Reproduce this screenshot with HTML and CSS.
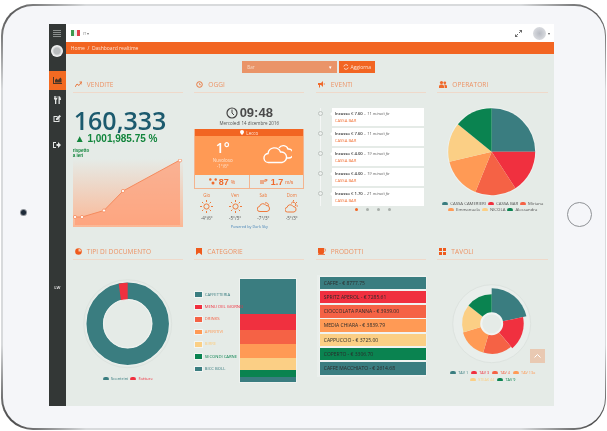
FILE: index.html
```html
<!DOCTYPE html>
<html lang="it">
<head>
  <meta charset="UTF-8" />
  <title>Dashboard realtime</title>
  <link rel="stylesheet" href="styles.css">
</head>
<body>
  <div class="tablet-edge">
    <div class="tablet">
      <div class="bezel bezel-left"><span class="camera"></span></div>

      <div class="screen">
        <nav class="sidebar">
          <div class="side-item side-menu">
            <svg width="8" height="7" viewBox="0 0 8 7"><path d="M0 .5h8M0 2.5h8M0 4.5h8M0 6.5h8" stroke="#8b8f8e" fill="none"/></svg>
          </div>
          <div class="side-avatar"></div>
          <div class="side-item side-active">
            <svg width="9" height="7" viewBox="0 0 9 7"><path d="M0 0v7h9V6H1V0zM2 5.500V3l1.500-1.500L5 3l2.500-2.500L8.500 2v3.500z" fill="#4a3526"/></svg>
          </div>
          <div class="side-item">
            <svg width="7" height="8" viewBox="0 0 7 8"><path d="M0 0h.7v2h.6V0H2v2h.7V0h.6v3L2.300 4v4H1V4L0 3zM4.500 8V0C6 0 7 1.500 7 4H5.800v4z" fill="#e4e6e5"/></svg>
          </div>
          <div class="side-item">
            <svg width="8" height="7" viewBox="0 0 8 7"><path d="M.5 1h4.500L4 2H1.500v4h4V4l1-1v4H.5zM3 3.500 6.500 0 8 1.300 4.500 5H3z" fill="#e4e6e5"/></svg>
          </div>
          <div class="side-item side-exit">
            <svg width="8" height="6" viewBox="0 0 8 6"><path d="M0 0h3v1H1v4h2v1H0zM3.500 2H5V0l3 3-3 3V4H3.500z" fill="#e4e6e5"/></svg>
          </div>
          <div class="side-foot">LW</div>
        </nav>

        <div class="main">
          <header class="topbar">
            <span class="flag"><i class="flag-g"></i><i class="flag-w"></i><i class="flag-r"></i></span>
            <span class="lang">IT ▾</span>
            <span class="topbar-space"></span>
            <svg class="expand" width="7" height="7" viewBox="0 0 7 7"><path d="M4 0h3v3zM0 7V4l3 3z" fill="#666"/><path d="M1.500 5.500l1.500-1.500M4 3l1.500-1.500" stroke="#666" fill="none"/></svg>
            <span class="user-avatar"></span>
            <span class="caret">▾</span>
          </header>

          <div class="crumbs">Home &nbsp;/&nbsp; Dashboard realtime</div>

          <div class="content">
            <div class="filter-row">
              <div class="filter-select"><span>Bar</span><span class="filter-caret">▾</span></div>
              <div class="filter-button">
                <svg width="6" height="6" viewBox="0 0 6 6"><path d="M5 1.800A2.300 2.300 0 0 0 .8 2.500M1 4.200A2.300 2.300 0 0 0 5.200 3.500" stroke="#fff" stroke-width=".7" fill="none"/></svg>
                Aggiorna
              </div>
            </div>

            <div class="dash-grid">
              <section class="panel">
                <h2 class="panel-title">
                  <svg width="7" height="7" viewBox="0 0 7 7"><path d="M0 6l2-3 2 1.500L6.500 1M4.500 1H7v2.500" stroke="#e8773f" fill="none"/></svg>
                  VENDITE
                </h2>
                <div class="sales-total">160,333</div>
                <div class="sales-change">▲ 1,001,985.75 %</div>
                <div class="sales-note">rispetto<br>a ieri</div>
                <svg class="sales-chart" width="110" height="68" viewBox="0 0 110 68">
                  <defs>
                    <linearGradient id="plotBg" x1="0" y1="0" x2="0" y2="1">
                      <stop offset="0" stop-color="#e5ebe7"/>
                      <stop offset="1" stop-color="#fbb795"/>
                    </linearGradient>
                  </defs>
                  <rect width="110" height="68" fill="url(#plotBg)"/>
                  <path d="M2 58H9L31 51.500 50 32 107 1V66H2z" fill="#ff9f78" fill-opacity=".75"/>
                  <path d="M2 58H9L31 51.500 50 32 107 1" fill="none" stroke="#f58b5e"/>
                  <g fill="#fff" stroke="#f58b5e" stroke-width=".8">
                    <circle cx="2" cy="58" r="1.600"/>
                    <circle cx="9" cy="58" r="1.600"/>
                    <circle cx="31" cy="51.500" r="1.600"/>
                    <circle cx="50" cy="32" r="1.600"/>
                    <circle cx="107" cy="1.500" r="1.600"/>
                  </g>
                </svg>
              </section>

              <section class="panel">
                <h2 class="panel-title">
                  <svg width="7" height="7" viewBox="0 0 7 7"><circle cx="3.500" cy="3.500" r="2.800" stroke="#e8773f" fill="none"/><path d="M3.500 2v1.700H5" stroke="#e8773f" stroke-width=".7" fill="none"/></svg>
                  OGGI
                </h2>
                <div class="clock">
                  <svg width="12" height="12" viewBox="0 0 12 12"><circle cx="6" cy="6" r="5" stroke="#444" stroke-width="1.200" fill="none"/><path d="M6 2.500V6l2 2" stroke="#444" fill="none"/></svg>
                  09:48
                </div>
                <div class="clock-date">Mercoledì 14 dicembre 2016</div>
                <div class="weather">
                  <div class="weather-place">
                    <svg width="4" height="5" viewBox="0 0 4 5"><path d="M2 0a2 2 0 0 1 2 2C4 3 2 5 2 5S0 3 0 2a2 2 0 0 1 2-2z" fill="#fff"/></svg>
                    Lecco
                  </div>
                  <div class="weather-now">
                    <div class="weather-temp">
                      <div class="temp-big">1°</div>
                      <div class="temp-label">Nuvoloso</div>
                      <div class="temp-label">-1°/6°</div>
                    </div>
                    <svg class="weather-icon" width="29" height="20" viewBox="0 0 29 20" fill="none" stroke="#fff" stroke-width="1.400">
                      <path d="M16 4a5 5 0 0 1 9 1 4.500 4.500 0 0 1 1 9h-2"/>
                      <path d="M6 18.500a4.500 4.500 0 0 1-1-9 6.500 6.500 0 0 1 12.500-1.500A5.300 5.300 0 0 1 19 18.500z"/>
                    </svg>
                  </div>
                  <div class="weather-stats">
                    <div class="stat">
                      <svg width="8" height="7" viewBox="0 0 8 7"><g fill="#ef6a2c"><circle cx="1.300" cy="1.500" r="1.200"/><circle cx="6.700" cy="1.500" r="1.200"/><circle cx="4" cy="5" r="1.500"/></g></svg>
                      <b>87</b> <small>%</small>
                    </div>
                    <div class="stat">
                      <svg width="9" height="5" viewBox="0 0 9 5"><path d="M0 2h6a1 1 0 1 0-1-1M0 4h4" stroke="#ef6a2c" fill="none"/></svg>
                      <b>1.7</b> <small>m/s</small>
                    </div>
                  </div>
                </div>
                <div class="forecast">
                  <div class="day">
                    <span class="day-name">Gio</span>
                    <svg class="sun" width="13" height="13" viewBox="0 0 13 13"><circle cx="6.500" cy="6.500" r="2.600"/><path d="M6.500 0v2M6.500 11v2M0 6.500h2M11 6.500h2M2 2l1.300 1.300M9.700 9.700 11 11M2 11l1.300-1.300M9.700 3.300 11 2"/></svg>
                    <span class="day-temp">-4°/6°</span>
                  </div>
                  <div class="day">
                    <span class="day-name">Ven</span>
                    <svg class="sun" width="13" height="13" viewBox="0 0 13 13"><circle cx="6.500" cy="6.500" r="2.600"/><path d="M6.500 0v2M6.500 11v2M0 6.500h2M11 6.500h2M2 2l1.300 1.300M9.700 9.700 11 11M2 11l1.300-1.300M9.700 3.300 11 2"/></svg>
                    <span class="day-temp">-5°/5°</span>
                  </div>
                  <div class="day">
                    <span class="day-name">Sab</span>
                    <svg class="sun" width="13" height="13" viewBox="0 0 13 13"><path d="M3 11.500a2.500 2.500 0 0 1-.5-5 3.500 3.500 0 0 1 6.500-1 3 3 0 0 1 1 6z"/><path d="M8 3a2.500 2.500 0 0 1 3.500 2.500"/></svg>
                    <span class="day-temp">-7°/3°</span>
                  </div>
                  <div class="day">
                    <span class="day-name">Dom</span>
                    <svg class="sun" width="13" height="13" viewBox="0 0 13 13"><path d="M2.500 12a2.300 2.300 0 0 1-.4-4.600 3.200 3.200 0 0 1 6-.9 2.800 2.800 0 0 1 .9 5.500z"/><path d="M6 3.500a2.500 2.500 0 0 1 4.500 2.500M8.500 0v1.500M12 2l-1 1M13 6h-1.500"/></svg>
                    <span class="day-temp">-5°/3°</span>
                  </div>
                </div>
                <div class="powered">Powered by Dark Sky</div>
              </section>

              <section class="panel">
                <h2 class="panel-title">
                  <svg width="8" height="7" viewBox="0 0 8 7"><path d="M0 2h3l2-2v6L3 4H2v2.500H1V4H0z" fill="#ef6a2c"/><path d="M6 2a1.500 1.500 0 0 1 0 2" stroke="#ef6a2c" fill="none" stroke-width=".6"/></svg>
                  EVENTI
                </h2>
                <div class="timeline">
                  <div class="event"><span class="event-dot"></span><div class="event-card"><div><b>Incasso € 7.60</b> – <i>11 minuti fa</i></div><div class="event-place">CASSA BAR</div></div></div>
                  <div class="event"><span class="event-dot"></span><div class="event-card"><div><b>Incasso € 7.60</b> – <i>11 minuti fa</i></div><div class="event-place">CASSA BAR</div></div></div>
                  <div class="event"><span class="event-dot"></span><div class="event-card"><div><b>Incasso € 4.00</b> – <i>19 minuti fa</i></div><div class="event-place">CASSA BAR</div></div></div>
                  <div class="event"><span class="event-dot"></span><div class="event-card"><div><b>Incasso € 4.00</b> – <i>19 minuti fa</i></div><div class="event-place">CASSA BAR</div></div></div>
                  <div class="event"><span class="event-dot"></span><div class="event-card"><div><b>Incasso € 1.70</b> – <i>21 minuti fa</i></div><div class="event-place">CASSA BAR</div></div></div>
                </div>
                <div class="pager"><i class="pager-on"></i><i></i><i></i><i></i></div>
              </section>

              <section class="panel">
                <h2 class="panel-title">
                  <svg width="8" height="7" viewBox="0 0 8 7"><g fill="#ef6a2c"><circle cx="2.500" cy="1.600" r="1.600"/><circle cx="5.800" cy="1.800" r="1.400"/><path d="M0 7V5a2 2 0 0 1 2-1.500h1A2 2 0 0 1 5 5v2zM5.600 7V4.800L5 3.500h1.200A1.800 1.800 0 0 1 8 5v2z"/></g></svg>
                  OPERATORI
                </h2>
                <svg class="pie-operators" width="111" height="98" viewBox="437 103 111 98">
                  <circle cx="491.700" cy="151.700" r="44.500" fill="#eef2ef"/>
                  <path d="M491.700 151.700V108.200A43.500 43.500 0 0 1 535.200 151.700z" fill="#3a7d80"/>
                  <path d="M491.700 151.700H535.200A43.500 43.500 0 0 1 515.400 188.200z" fill="#f0303f"/>
                  <path d="M491.700 151.700 515.400 188.200A43.500 43.500 0 0 1 475.400 192z" fill="#f56245"/>
                  <path d="M491.700 151.700 475.400 192A43.500 43.500 0 0 1 449.400 161.800z" fill="#ff9a55"/>
                  <path d="M491.700 151.700 449.400 161.800A43.500 43.500 0 0 1 457.900 124.300z" fill="#fbcf85"/>
                  <path d="M491.700 151.700 457.900 124.300A43.500 43.500 0 0 1 491.700 108.200z" fill="#0a8350"/>
                </svg>
                <div class="legend legend-dark">
                  <span><i class="sw-teal"></i>CASSA CAMERIERI</span>
                  <span><i class="sw-red"></i>CASSA BAR</span>
                  <span><i class="sw-coral"></i>Miriana</span>
                  <span><i class="sw-orange"></i>Emmanuela</span>
                  <span><i class="sw-yellow"></i>NICOLA</span>
                  <span><i class="sw-green"></i>Alessandra</span>
                </div>
              </section>

              <section class="panel">
                <h2 class="panel-title">
                  <svg width="7" height="7" viewBox="0 0 7 7"><circle cx="3.500" cy="3.500" r="3.300" fill="#ef5a1c"/><path d="M3.500 3.500V.8A2.700 2.700 0 0 1 6.200 3.500z" fill="#f9c8a8"/></svg>
                  TIPI DI DOCUMENTO
                </h2>
                <svg class="donut" width="110" height="94" viewBox="73 279 110 94">
                  <circle cx="127.700" cy="323.700" r="44" fill="none" stroke="#dde3df"/>
                  <circle cx="127.700" cy="323.700" r="42" fill="#eef2ef"/>
                  <circle cx="127.700" cy="323.700" r="33" fill="none" stroke="#3a7d80" stroke-width="16.500"/>
                  <path d="M127.700 282.700V307.200L122 307.900 118.700 283.700A41 41 0 0 1 127.700 282.700z" fill="#f0303f"/>
                  <circle cx="127.700" cy="323.700" r="24" fill="#e5ebe7" stroke="#eef2ef"/>
                </svg>
                <div class="legend">
                  <span class="c-teal"><i class="sw-teal"></i>Scontrini</span>
                  <span class="c-red"><i class="sw-red"></i>Fatture</span>
                </div>
              </section>

              <section class="panel">
                <h2 class="panel-title">
                  <svg width="6" height="7" viewBox="0 0 6 7"><path d="M0 0h6v7L3 4.800 0 7z" fill="#ef5a1c"/></svg>
                  CATEGORIE
                </h2>
                <div class="cat-body">
                  <ul class="cat-legend">
                    <li class="c-teal"><i class="box sw-teal"></i>CAFFETTERIA</li>
                    <li class="c-red"><i class="box sw-red"></i>MENU DEL GIORNO</li>
                    <li class="c-coral"><i class="box sw-coral"></i>DRINKS</li>
                    <li class="c-orange"><i class="box sw-orange"></i>APERITIVI</li>
                    <li class="c-yellow"><i class="box sw-yellow"></i>BIRRE</li>
                    <li class="c-green"><i class="box sw-green"></i>SECONDI CARNE</li>
                    <li class="c-teal"><i class="box sw-teal"></i>BICC BOLL</li>
                  </ul>
                  <div class="cat-stack">
                    <i class="sw-teal seg-1"></i>
                    <i class="sw-red seg-2"></i>
                    <i class="sw-coral seg-3"></i>
                    <i class="sw-orange seg-4"></i>
                    <i class="sw-yellow seg-5"></i>
                    <i class="sw-green seg-6"></i>
                    <i class="sw-teal seg-7"></i>
                  </div>
                </div>
              </section>

              <section class="panel">
                <h2 class="panel-title">
                  <svg width="8" height="7" viewBox="0 0 8 7"><path d="M0 0h6v4.500a1.500 1.500 0 0 1-1.500 1.500h-3A1.500 1.500 0 0 1 0 4.500zM0 6.300h7V7H0z" fill="#ef5a1c"/><path d="M6 1h.8a.9.9 0 0 1 0 2.200H6" stroke="#ef5a1c" stroke-width=".6" fill="none"/></svg>
                  PRODOTTI
                </h2>
                <div class="products">
                  <div class="product sw-teal">CAFFE - € 8777.75</div>
                  <div class="product sw-red">SPRITZ APEROL - € 7285.61</div>
                  <div class="product sw-coral">CIOCCOLATA PANNA - € 3939.00</div>
                  <div class="product sw-orange">MEDIA CHIARA - € 3839.79</div>
                  <div class="product sw-yellow">CAPPUCCIO - € 3725.00</div>
                  <div class="product sw-green">COPERTO - € 3306.70</div>
                  <div class="product sw-teal">CAFFE MACCHIATO - € 2614.68</div>
                </div>
              </section>

              <section class="panel">
                <h2 class="panel-title">
                  <svg width="7" height="7" viewBox="0 0 7 7"><path d="M0 0h3v3H0zM4 0h3v3H4zM0 4h3v3H0zM4 4h3v3H4z" fill="#ef5a1c"/></svg>
                  TAVOLI
                </h2>
                <svg class="polar" width="111" height="88" viewBox="437 280 111 88">
                  <circle cx="491.700" cy="323.700" r="39" fill="#e9eeeb" stroke="#dde3df"/>
                  <path d="M491.700 323.700V288.200A35.500 35.500 0 0 1 526.400 316.300z" fill="#3a7d80"/>
                  <path d="M491.700 323.700 523 317A32 32 0 0 1 512.300 348.200z" fill="#f0303f"/>
                  <path d="M491.700 323.700 511 346.700A30 30 0 0 1 483.200 352.500z" fill="#f56245"/>
                  <path d="M491.700 323.700 483.200 352.500A30 30 0 0 1 463 332.500z" fill="#ff9a55"/>
                  <path d="M491.700 323.700 463.500 332.300A29.500 29.500 0 0 1 468.500 305.500z" fill="#fbcf85"/>
                  <path d="M491.700 323.700 468.500 305.500A29.500 29.500 0 0 1 491.700 294.200z" fill="#0a8350"/>
                  <circle cx="491.700" cy="323.700" r="10.500" fill="#e5ebe7" stroke="#f1f4f2" stroke-width="2"/>
                </svg>
                <div class="legend legend-small">
                  <span class="c-teal"><i class="sw-teal"></i>TAV 1</span>
                  <span class="c-red"><i class="sw-red"></i>TAV 3</span>
                  <span class="c-coral"><i class="sw-coral"></i>TAV 4</span>
                  <span class="c-orange"><i class="sw-orange"></i>TAV 13a</span>
                  <span class="c-yellow"><i class="sw-yellow"></i>STEAK 44</span>
                  <span class="c-green"><i class="sw-green"></i>TAV 9</span>
                </div>
                <div class="back-top">
                  <svg width="7" height="4" viewBox="0 0 7 4"><path d="M.5 3.500l3-3 3 3" stroke="#fff" fill="none"/></svg>
                </div>
              </section>
            </div>
          </div>
        </div>
      </div>

      <div class="bezel bezel-right"><span class="home-button"></span></div>
    </div>
  </div>
</body>
</html>
```

FILE: styles.css
```css
html, body {
  margin: 0;
  background: #fff;
  overflow: hidden;
}

body {
  width: 607px;
  height: 431px;
  font-family: "Open Sans", sans-serif;
  color: #444;
}

/* tablet frame */
.tablet-edge {
  margin: 4px 1px 1px 1px;
  height: 426px;
  box-sizing: border-box;
  padding: 1.5px 1.5px 2px;
  border-radius: 32px;
  background:
    radial-gradient(circle at 0 0, #444 0, rgba(90,90,90,0) 85px),
    radial-gradient(circle at 100% 0, #444 0, rgba(90,90,90,0) 85px),
    radial-gradient(circle at 0 100%, #333 0, rgba(90,90,90,0) 85px),
    radial-gradient(circle at 100% 100%, #333 0, rgba(90,90,90,0) 85px),
    #d8dadc;
}

.tablet {
  display: flex;
  height: 100%;
  background: #f5f6f9;
  border-radius: 30px;
  overflow: hidden;
}

.bezel {
  display: flex;
  align-items: center;
  justify-content: center;
}

.bezel-left {
  width: 46.5px;
}

.bezel-right {
  width: 51px;
  padding-bottom: 4px;
}

.camera {
  width: 5px;
  height: 5px;
  margin-right: 4px;
  margin-bottom: 8px;
  border-radius: 50%;
  background: #1d2a38;
  box-shadow: 0 0 0 1px #8b8f96;
}

.home-button {
  width: 25px;
  height: 25px;
  border-radius: 50%;
  border: 1px solid #8f9296;
  box-sizing: border-box;
  margin-left: 1px;
}

/* screen */
.screen {
  display: flex;
  width: 505px;
  height: 382px;
  margin-top: 18.500px;
  filter: blur(0.35px);
}

.sidebar {
  width: 17px;
  flex: none;
  display: flex;
  flex-direction: column;
  align-items: center;
  background: #333736;
}

.side-item {
  width: 100%;
  height: 19px;
  display: flex;
  align-items: center;
  justify-content: center;
}

.side-menu {
  margin-top: 0;
  height: 18px;
}

.side-avatar {
  width: 12px;
  height: 12px;
  margin-top: 3px;
  margin-bottom: 14px;
  border-radius: 50%;
  background: radial-gradient(circle, #b9bcbe 0, #b9bcbe 35%, #f1f2f2 60%);
}

.side-active {
  background: #f26a22;
  margin-bottom: 0;
}

.side-exit {
  margin-top: 7px;
}

.side-foot {
  margin-top: auto;
  margin-bottom: 116px;
  font-size: 4px;
  font-weight: 700;
  color: #ddd;
}

.main {
  flex: 1;
  min-width: 0;
  display: flex;
  flex-direction: column;
  background: #e5ebe7;
}

.topbar {
  height: 18px;
  flex: none;
  display: flex;
  align-items: center;
  padding: 0 4px 0 5px;
  background: #fff;
}

.flag {
  display: flex;
  width: 9px;
  height: 6px;
}

.flag i {
  flex: 1;
}

.flag-g { background: #3e9a4f; }
.flag-w { background: #eee; }
.flag-r { background: #e0404a; }

.lang {
  margin-left: 3px;
  font-size: 4px;
  color: #777;
}

.topbar-space {
  flex: 1;
}

.expand {
  margin-right: 11px;
}

.user-avatar {
  width: 13px;
  height: 13px;
  border-radius: 50%;
  background: radial-gradient(circle, #b9bcc4 0, #d4d6db 60%, #e2e3e6 100%);
}

.caret {
  margin-left: 2px;
  font-size: 4px;
  color: #555;
}

.crumbs {
  height: 12px;
  flex: none;
  padding-left: 5px;
  background: #f26522;
  color: #fbe3d3;
  font-size: 5px;
  line-height: 12px;
}

.content {
  position: relative;
  flex: 1;
  padding: 7px 6px 0 7px;
}

.filter-row {
  display: flex;
  justify-content: center;
  gap: 2px;
  height: 12px;
  margin-left: -3px;
}

.filter-select {
  width: 95px;
  display: flex;
  justify-content: space-between;
  align-items: center;
  box-sizing: border-box;
  padding: 0 5px;
  background: #ea9468;
  color: #f7dcc8;
  font-size: 4.500px;
}

.filter-caret {
  color: #fff;
}

.filter-button {
  width: 36px;
  display: flex;
  align-items: center;
  justify-content: center;
  gap: 1px;
  background: #f26522;
  color: #fbe3d3;
  font-size: 5px;
}

.dash-grid {
  display: grid;
  grid-template-columns: 110px 110px 110px 111px;
  grid-template-rows: 159px 1fr;
  column-gap: 11.500px;
  row-gap: 7.500px;
  margin-top: 4px;
}

.panel {
  min-width: 0;
  position: relative;
}

.panel-title {
  display: flex;
  align-items: center;
  gap: 5px;
  height: 15px;
  margin: 0;
  padding-left: 2px;
  border-bottom: 1px solid #efd9ca;
  color: #ed9264;
  font-size: 6.500px;
  font-weight: 400;
  letter-spacing: 0.1px;
}

/* vendite */
.sales-total {
  margin-top: 14px;
  padding-left: 1px;
  font-size: 25px;
  line-height: 26px;
  font-weight: 600;
  color: #1c5a6e;
}

.sales-change {
  padding-left: 2px;
  font-family: "Liberation Sans", sans-serif;
  font-size: 10px;
  line-height: 12px;
  font-weight: 700;
  color: #12853c;
}

.sales-note {
  margin-top: 3px;
  font-family: "Liberation Sans", sans-serif;
  font-size: 4.500px;
  line-height: 5px;
  font-weight: 700;
  color: #12853c;
}

.sales-chart {
  display: block;
  margin-top: 1px;
}

/* oggi */
.clock {
  display: flex;
  align-items: center;
  justify-content: center;
  gap: 2px;
  margin-top: 13px;
  height: 13px;
  font-family: "Liberation Sans", sans-serif;
  font-size: 13px;
  font-weight: 700;
  color: #4a4a4a;
}

.clock-date {
  margin-top: 1px;
  text-align: center;
  font-size: 4.500px;
  line-height: 7px;
  color: #555;
}

.weather {
  margin-top: 2px;
  border: 1px solid #f3b48f;
  border-top: 0;
}

.weather-place {
  height: 7px;
  display: flex;
  align-items: center;
  justify-content: center;
  gap: 2px;
  background: #f26522;
  color: #fbe3d3;
  font-size: 4.500px;
}

.weather-now {
  height: 39px;
  display: flex;
  background: #ff9a55;
  color: #fff;
}

.weather-temp {
  width: 55px;
  text-align: center;
}

.temp-big {
  margin-top: 2px;
  font-size: 14px;
  line-height: 19px;
  font-weight: 600;
}

.temp-label {
  font-size: 4.500px;
  line-height: 6px;
  color: #fde4d0;
}

.weather-icon {
  margin: 8px 0 0 13px;
}

.weather-stats {
  display: flex;
  height: 13px;
}

.stat {
  flex: 1;
  display: flex;
  align-items: center;
  justify-content: center;
  gap: 2px;
  font-family: "Liberation Sans", sans-serif;
  color: #ef6a2c;
}

.stat + .stat {
  border-left: 1px solid #f3b48f;
}

.stat b {
  font-size: 9px;
}

.stat small {
  font-size: 5px;
}

.forecast {
  display: flex;
  justify-content: space-between;
  margin-top: 3px;
}

.day {
  width: 25px;
  display: flex;
  flex-direction: column;
  align-items: center;
}

.day-name {
  font-size: 4.500px;
  line-height: 7px;
  color: #ef7a3c;
}

.sun {
  margin-top: 1px;
  fill: none;
  stroke: #ef7a3c;
  stroke-width: 1;
}

.day-temp {
  margin-top: 2px;
  font-size: 4.500px;
  line-height: 6px;
  color: #555;
}

.powered {
  margin-top: 3px;
  text-align: center;
  font-size: 3.800px;
  line-height: 5px;
  color: #4a86b8;
}

/* eventi */
.timeline {
  position: relative;
  margin-top: 15px;
  padding-left: 16px;
  display: flex;
  flex-direction: column;
  gap: 2.500px;
}

.timeline::before {
  content: "";
  position: absolute;
  left: 4px;
  top: 0;
  bottom: 0;
  width: 1px;
  background: #f4f6f5;
}

.event {
  position: relative;
}

.event-dot {
  position: absolute;
  left: -14px;
  top: 3px;
  width: 5px;
  height: 5px;
  border-radius: 50%;
  background: #eef1ef;
  border: 1px solid #bdc3bf;
  box-sizing: border-box;
}

.event-card {
  position: relative;
  width: 92.500px;
  height: 17.500px;
  box-sizing: border-box;
  padding: 2px 0 0 3px;
  background: #fff;
  font-size: 4.200px;
  line-height: 7px;
  color: #666;
}

.event-card::before {
  content: "";
  position: absolute;
  left: -2px;
  top: 4px;
  border-style: solid;
  border-width: 2px 2px 2px 0;
  border-color: transparent #fff transparent transparent;
}

.event-card b {
  font-weight: 600;
  color: #333;
}

.event-place {
  color: #f27a42;
}

.pager {
  display: flex;
  justify-content: center;
  gap: 7.500px;
  margin-top: 2px;
  padding-left: 8px;
  margin-left: -4px;
}

.pager i {
  width: 3.500px;
  height: 3.500px;
  border-radius: 50%;
  background: #a9afab;
}

.pager .pager-on {
  background: #f26522;
}

/* operatori */
.pie-operators {
  display: block;
  margin-top: 10px;
}

.legend {
  display: flex;
  flex-wrap: wrap;
  justify-content: center;
  column-gap: 2px;
  font-size: 4.300px;
  line-height: 5.500px;
  color: #555;
}

.legend span {
  display: flex;
  align-items: center;
}

.legend i {
  width: 6px;
  height: 3px;
  margin-right: 2px;
  border-radius: 3px 3px 1px 1px;
}

.legend-small {
  margin-top: 1px;
  column-gap: 3px;
  line-height: 7px;
  font-size: 3.800px;
}

.sw-teal { background: #3a7d80; }
.sw-red { background: #f0303f; }
.sw-coral { background: #f56245; }
.sw-orange { background: #ff9a55; }
.sw-yellow { background: #fbcf85; }
.sw-green { background: #0a8350; }

.c-teal { color: #3a7d80; }
.c-red { color: #f0303f; }
.c-coral { color: #f56245; }
.c-orange { color: #ff9a55; }
.c-yellow { color: #fbcf85; }
.c-green { color: #0a8350; }

/* tipi di documento */
.donut {
  display: block;
  margin-top: 19px;
}

.panel .donut + .legend {
  margin-top: 3px;
  column-gap: 2px;
}

/* categorie */
.cat-body {
  position: relative;
  display: flex;
  margin-top: 19px;
}

.cat-legend {
  list-style: none;
  position: absolute;
  left: 1px;
  top: 10px;
  margin: 0;
  padding: 0;
  font-size: 4.200px;
  line-height: 12.400px;
  white-space: nowrap;
}

.cat-legend li {
  display: flex;
  align-items: center;
}

.cat-legend .box {
  width: 7px;
  height: 4.500px;
  margin-right: 2.500px;
  box-shadow: 0 0 0 1px #f2f5f3;
}

.cat-stack {
  width: 55.500px;
  margin-left: 46px;
  height: 103.500px;
  display: flex;
  flex-direction: column;
  box-shadow: 0 0 0 1px #eef2ef;
}

.cat-stack i { display: block; }
.seg-1 { height: 35.500px; }
.seg-2 { height: 15.700px; }
.seg-3 { height: 14px; }
.seg-4 { height: 14.300px; }
.seg-5 { height: 12px; }
.seg-6 { height: 6.700px; }
.seg-7 { height: 5.300px; }

/* prodotti */
.products {
  margin: 15px 0 0 1.500px;
  padding: 2px 0 2px 2.500px;
  background: #eaefec;
  display: flex;
  flex-direction: column;
  gap: 1.800px;
}

.product {
  height: 12.500px;
  padding-left: 4px;
  font-size: 5px;
  line-height: 12.500px;
  color: #2b2b2b;
  box-shadow: 0 0 0 .5px #f5f7f6;
  white-space: nowrap;
}

/* tavoli */
.polar {
  display: block;
  margin-top: 20px;
}

.back-top {
  position: absolute;
  right: 3.500px;
  top: 105px;
  width: 15px;
  height: 14.500px;
  display: flex;
  align-items: center;
  justify-content: center;
  background: #e9c9b2;
}
```
